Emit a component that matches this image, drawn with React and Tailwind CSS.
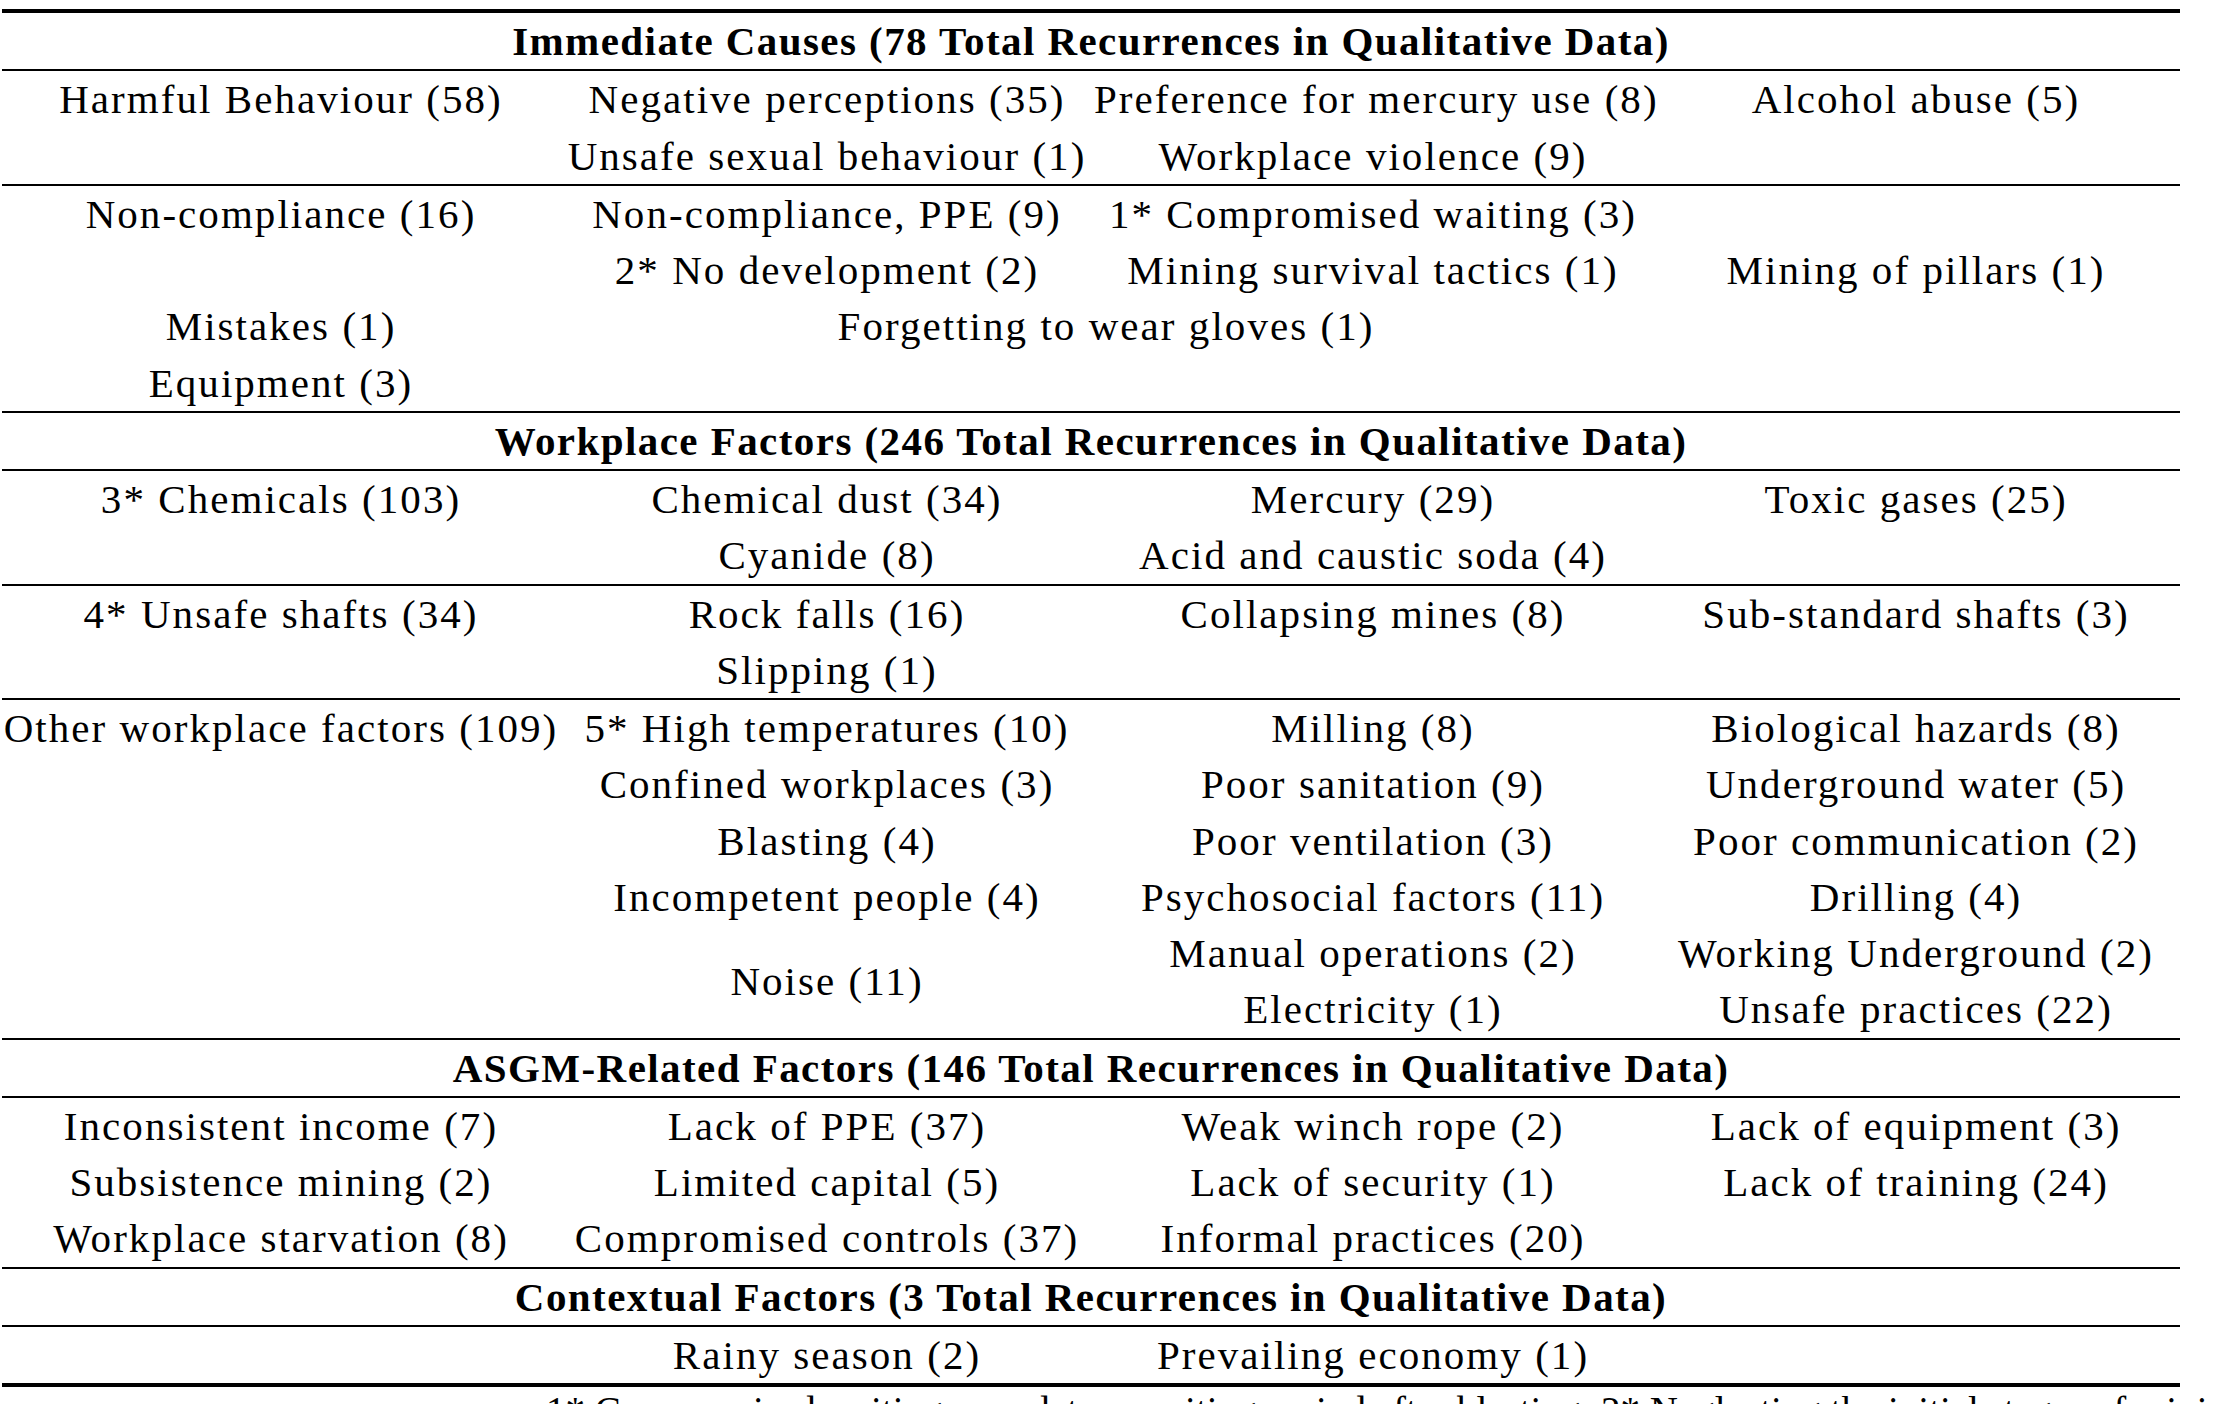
const c = (t, extra = {}) => ({ t, ...extra });

const sections = [
  {
    title: 'Immediate Causes (78 Total Recurrences in Qualitative Data)',
    groups: [
      [
        ['Harmful Behaviour (58)', 'Negative perceptions (35)', 'Preference for mercury use (8)', 'Alcohol abuse (5)'],
        ['', 'Unsafe sexual behaviour (1)', 'Workplace violence (9)', ''],
      ],
      [
        ['Non-compliance (16)', 'Non-compliance, PPE (9)', '1* Compromised waiting (3)', ''],
        ['', '2* No development (2)', 'Mining survival tactics (1)', 'Mining of pillars (1)'],
        ['Mistakes (1)', c('Forgetting to wear gloves (1)', { colSpan: 2 }), ''],
        ['Equipment (3)', '', '', ''],
      ],
    ],
  },
  {
    title: 'Workplace Factors (246 Total Recurrences in Qualitative Data)',
    groups: [
      [
        ['3* Chemicals (103)', 'Chemical dust (34)', 'Mercury (29)', 'Toxic gases (25)'],
        ['', 'Cyanide (8)', 'Acid and caustic soda (4)', ''],
      ],
      [
        ['4* Unsafe shafts (34)', 'Rock falls (16)', 'Collapsing mines (8)', 'Sub-standard shafts (3)'],
        ['', 'Slipping (1)', '', ''],
      ],
      [
        ['Other workplace factors (109)', '5* High temperatures (10)', 'Milling (8)', 'Biological hazards (8)'],
        ['', 'Confined workplaces (3)', 'Poor sanitation (9)', 'Underground water (5)'],
        ['', 'Blasting (4)', 'Poor ventilation (3)', 'Poor communication (2)'],
        ['', 'Incompetent people (4)', 'Psychosocial factors (11)', 'Drilling (4)'],
        ['', c('Noise (11)', { rowSpan: 2 }), 'Manual operations (2)', 'Working Underground (2)'],
        ['', 'Electricity (1)', 'Unsafe practices (22)'],
      ],
    ],
  },
  {
    title: 'ASGM-Related Factors (146 Total Recurrences in Qualitative Data)',
    groups: [
      [
        ['Inconsistent income (7)', 'Lack of PPE (37)', 'Weak winch rope (2)', 'Lack of equipment (3)'],
        ['Subsistence mining (2)', 'Limited capital (5)', 'Lack of security (1)', 'Lack of training (24)'],
        ['Workplace starvation (8)', 'Compromised controls (37)', 'Informal practices (20)', ''],
      ],
    ],
  },
  {
    title: 'Contextual Factors (3 Total Recurrences in Qualitative Data)',
    groups: [[['', 'Rainy season (2)', 'Prevailing economy (1)', '']]],
  },
];

function Cell({ cell }) {
  const data = typeof cell === 'string' ? { t: cell } : cell;
  return (
    <td
      colSpan={data.colSpan}
      rowSpan={data.rowSpan}
      className="h-[56.25px] p-0 text-center align-middle whitespace-nowrap"
    >
      {data.t}
    </td>
  );
}

export default function App() {
  return (
    <div className="min-h-screen bg-white text-black font-['Liberation_Serif',serif] overflow-hidden">
      <div className="pt-[9px] pl-[2px]">
        <table className="w-[2178px] table-fixed border-collapse text-[41px] leading-[56.25px] tracking-[0.05em]">
          <colgroup>
            <col className="w-[558px]" />
            <col className="w-[534px]" />
            <col className="w-[558px]" />
            <col className="w-[528px]" />
          </colgroup>
          {sections.map((s, si) => (
            <tbody key={si}>
              <tr className={`border-b-2 border-black ${si === 0 ? 'border-t-4' : ''}`}>
                <th colSpan={4} className="h-[56.25px] p-0 text-center font-bold tracking-[0.035em] whitespace-nowrap">
                  {s.title}
                </th>
              </tr>
              {s.groups.map((g, gi) =>
                g.map((row, ri) => {
                  const lastRow = ri === g.length - 1;
                  const lastOverall = si === sections.length - 1 && gi === s.groups.length - 1 && lastRow;
                  return (
                    <tr
                      key={`${gi}-${ri}`}
                      className={lastOverall ? 'border-b-4 border-black' : lastRow ? 'border-b-2 border-black' : ''}
                    >
                      {row.map((cell, ci) => (
                        <Cell key={ci} cell={cell} />
                      ))}
                    </tr>
                  );
                })
              )}
            </tbody>
          ))}
        </table>
        <p className="-mt-[4px] pl-[544px] text-[39px] leading-[56px] whitespace-nowrap">
          1* Compromised waiting: mandatory waiting period after blasting; 2* Neglecting the initial stages of mining development
        </p>
      </div>
    </div>
  );
}
